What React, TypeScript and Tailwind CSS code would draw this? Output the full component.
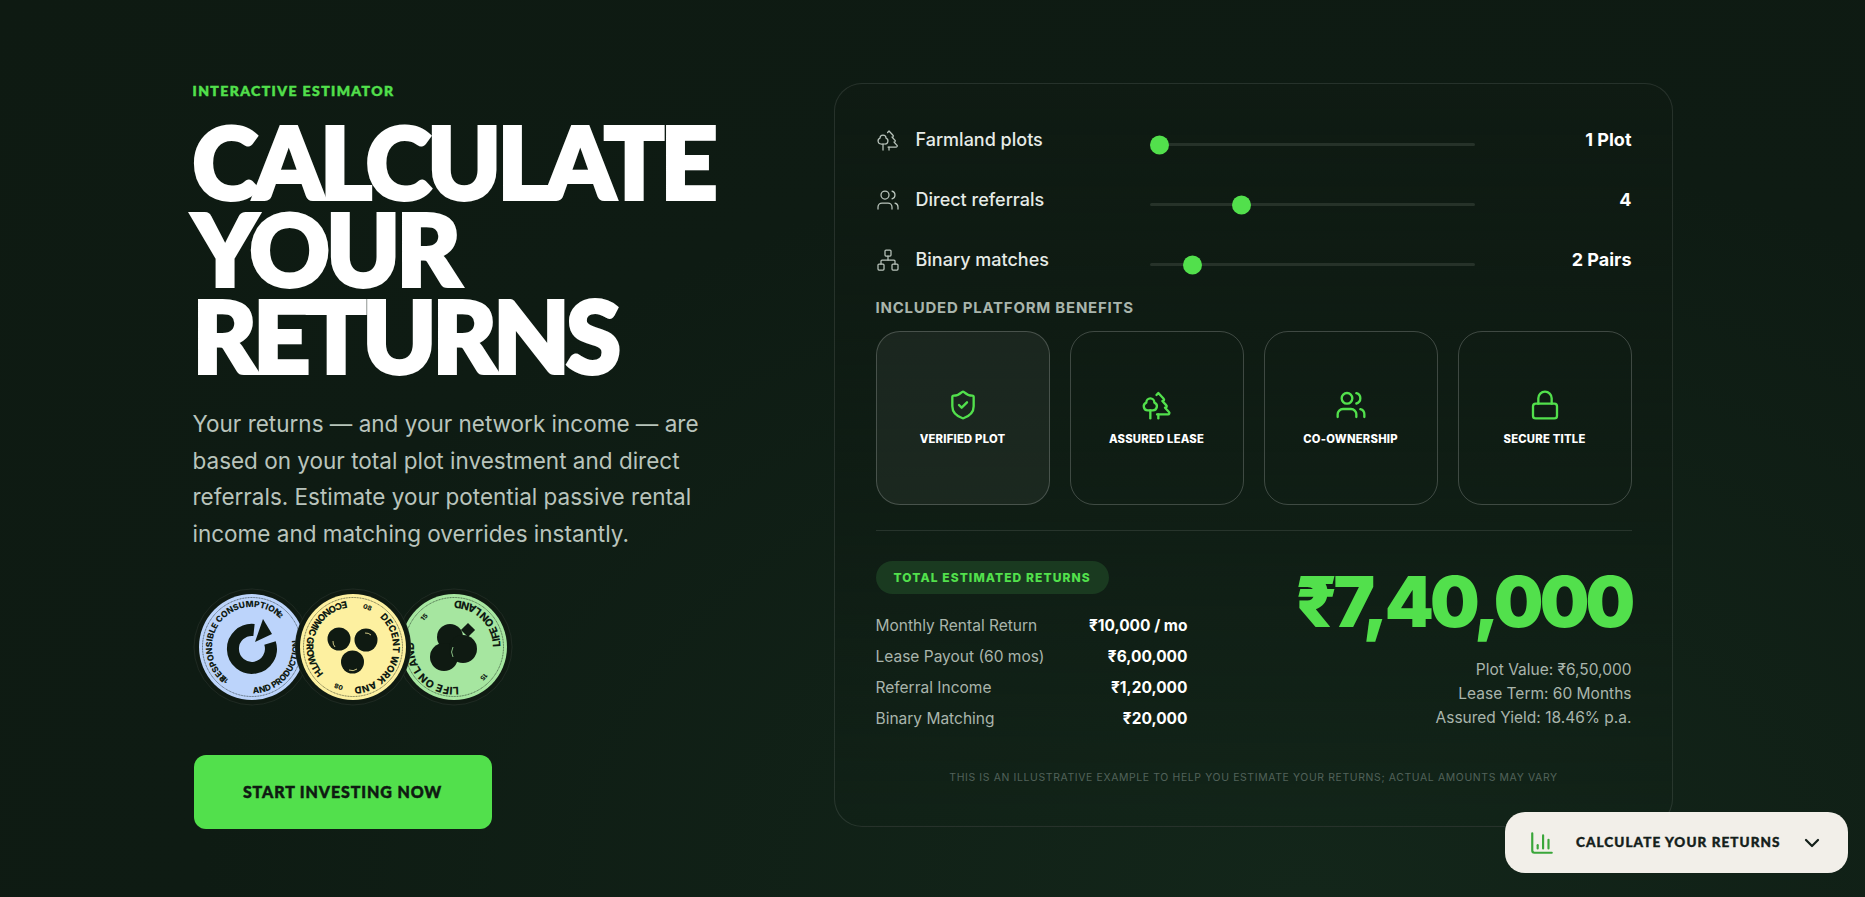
import { ChartColumn, ChevronDown, Lock, Network, ShieldCheck, Trees, Users } from "lucide-react";

const sliders = [
  { icon: Trees, label: "Farmland plots", pct: 0, value: "1 Plot" },
  { icon: Users, label: "Direct referrals", pct: 27, value: "4" },
  { icon: Network, label: "Binary matches", pct: 11, value: "2 Pairs" },
];

const benefits = [
  { icon: ShieldCheck, label: "Verified Plot", active: true },
  { icon: Trees, label: "Assured Lease", active: false },
  { icon: Users, label: "Co-Ownership", active: false },
  { icon: Lock, label: "Secure Title", active: false },
];

const breakdown = [
  ["Monthly Rental Return", "₹10,000 / mo"],
  ["Lease Payout (60 mos)", "₹6,00,000"],
  ["Referral Income", "₹1,20,000"],
  ["Binary Matching", "₹20,000"],
];

const DARK = "#0f1a12";

function Badge({
  id,
  fill,
  top,
  bottom,
  num,
  rotate,
  size,
  children,
}: {
  id: string;
  fill: string;
  top: string;
  bottom: string;
  num: string;
  rotate: number;
  size: number;
  children: React.ReactNode;
}) {
  return (
    <svg viewBox="0 0 120 120" className="h-[120px] w-[120px]">
      <circle cx="60" cy="60" r="58" fill={DARK} stroke="#ffffff" strokeOpacity="0.07" />
      <circle cx="60" cy="60" r="53" fill={fill} />
      <circle cx="60" cy="60" r="49.5" fill="none" stroke={DARK} strokeWidth="0.6" strokeDasharray="1 0.6" />
      <defs>
        <path id={`${id}-t`} d="M60 100 A40 40 0 0 1 60 20 A40 40 0 0 1 60 100" />
        <path id={`${id}-b`} d="M60 13.5 A46.5 46.5 0 0 0 60 106.5 A46.5 46.5 0 0 0 60 13.5" />
      </defs>
      <g
        transform={`rotate(${rotate} 60 60)`}
        fill={DARK}
        style={{ fontFamily: "Inter, sans-serif", fontSize: size, fontWeight: 800 }}
      >
        <text textAnchor="middle">
          <textPath href={`#${id}-t`} startOffset="50%">
            {top}
          </textPath>
        </text>
        <text textAnchor="middle">
          <textPath href={`#${id}-b`} startOffset="50%">
            {bottom}
          </textPath>
        </text>
        <text x="60" y="60" textAnchor="middle" transform="rotate(90 60 60) translate(0 -40)" style={{ fontSize: 6.5 }}>
          {num}
        </text>
        <text x="60" y="60" textAnchor="middle" transform="rotate(-90 60 60) translate(0 -40)" style={{ fontSize: 6.5 }}>
          {num}
        </text>
      </g>
      {children}
    </svg>
  );
}

export default function App() {
  return (
    <div className="h-[897px] overflow-hidden bg-[radial-gradient(ellipse_at_70%_100%,#13261a_0%,#0e1b13_60%,#0e1a12_100%)] font-['Inter',sans-serif]">
      <div className="mx-auto flex w-[1480px] justify-between pt-[83px]">
        <div className="w-[560px]">
          <p className="text-[14px] leading-[16px] font-black tracking-[0.1em] text-[#52e04c] uppercase font-['Lato',sans-serif] [-webkit-text-stroke:0.5px_#52e04c]">
            Interactive Estimator
          </p>
          <h1 className="mt-[18px] text-[99px] leading-[87px] font-black tracking-[-0.037em] text-white uppercase font-['Lato',sans-serif] [-webkit-text-stroke:4px_white]">
            Calculate
            <br />
            Your
            <br />
            Returns
          </h1>
          <p className="mt-[28px] w-[510px] text-[22.5px] leading-[36.6px] text-[#b9c4bc]">
            Your returns — and your network income — are based on your total plot investment and direct referrals.
            Estimate your potential passive rental income and matching overrides instantly.
          </p>
          <div className="mt-[35px] -ml-px flex">
            <Badge id="blue" fill="#bcd4fb" top="RESPONSIBLE CONSUMPTION" bottom="AND PRODUCTION" num="12" rotate={-50} size={8.5}>
              <path d="M78 56 A19 19 0 1 1 62 43" fill="none" stroke={DARK} strokeWidth="12" />
              <path d="M71 32 L80 47 L63 55 Z" fill={DARK} />
            </Badge>
            <div className="relative z-10 -ml-[19px]">
              <Badge id="yellow" fill="#fdf0a0" top="DECENT WORK AND" bottom="ECONOMIC GROWTH" num="08" rotate={110} size={9.5}>
                <circle cx="46" cy="52" r="11.5" fill={DARK} />
                <circle cx="73" cy="53" r="11.5" fill={DARK} />
                <circle cx="59.5" cy="75" r="11.5" fill={DARK} />
                <path d="M42 60 A8 8 0 0 1 40 54" fill="none" stroke="#fdf0a0" strokeWidth="0.8" />
                <path d="M72 46 A8 8 0 0 1 78 48" fill="none" stroke="#fdf0a0" strokeWidth="0.8" />
                <path d="M56 83 A8 8 0 0 0 64 82" fill="none" stroke="#fdf0a0" strokeWidth="0.8" />
              </Badge>
            </div>
            <div className="-ml-[19px]">
              <Badge id="green" fill="#a6e6a0" top="LIFE ON LAND" bottom="LIFE ON LAND" num="15" rotate={225} size={10.5}>
                <circle cx="56" cy="50" r="13" fill={DARK} />
                <circle cx="50" cy="70" r="14" fill={DARK} />
                <circle cx="69" cy="62" r="14" fill={DARK} />
                <rect x="69" y="38" width="10" height="10" transform="rotate(45 74 43)" fill={DARK} />
                <path d="M59 60 A10 10 0 0 0 59 70" fill="none" stroke="#a6e6a0" strokeWidth="0.8" />
              </Badge>
            </div>
          </div>
          <button className="mt-[48px] ml-px flex h-[74px] w-[298px] items-center justify-center rounded-xl bg-[#52e04c] text-[16px] font-black tracking-[0.055em] text-[#0f1a12] uppercase font-['Lato',sans-serif] [-webkit-text-stroke:0.5px_#0f1a12]">
            Start Investing Now
          </button>
        </div>

        <div className="h-[744px] w-[839px] rounded-[28px] border border-white/10 bg-[linear-gradient(180deg,#0f1b13_0%,#10201500_100%)] pt-[26px] pr-10 pl-[41px]">
          <div>
            {sliders.map((row) => (
              <div key={row.label} className="grid h-[60px] grid-cols-[274px_325px_1fr] items-center">
                <div className="flex items-center gap-4">
                  <row.icon size={24} strokeWidth={1.25} className="text-[#b9c4bc]" />
                  <span className="-mt-[2px] text-[18px] font-medium text-[#e6ebe7]">{row.label}</span>
                </div>
                <div className="relative mt-[9px] h-[3px] rounded-full bg-[#263229]">
                  <span
                    className="absolute top-1/2 h-[19px] w-[19px] -translate-y-1/2 rounded-full bg-[#52e04c]"
                    style={{ left: `calc(${row.pct}% - ${row.pct * 0.19}px)` }}
                  />
                </div>
                <span className="-mt-[2px] text-right text-[18px] font-bold text-white">{row.value}</span>
              </div>
            ))}
          </div>

          <h2 className="mt-[8px] text-[15px] leading-[20px] font-bold tracking-[0.05em] text-[#a9b5ac] uppercase">
            Included Platform Benefits
          </h2>
          <div className="mt-[13px] grid grid-cols-4 gap-5">
            {benefits.map((b) => (
              <div
                key={b.label}
                className={`flex h-[174px] flex-col items-center justify-center gap-[10px] rounded-[24px] border border-white/20 ${
                  b.active ? "bg-white/5" : ""
                }`}
              >
                <b.icon size={32} strokeWidth={1.75} className="text-[#52e04c]" />
                <span className="text-[11.25px] font-extrabold tracking-[0.02em] text-white uppercase">{b.label}</span>
              </div>
            ))}
          </div>

          <div className="mt-[25px] flex justify-between border-t border-white/10 pt-[30px]">
            <div className="w-[312px]">
              <span className="inline-block rounded-full bg-[#1a3a20] px-[18px] py-[8px] text-[12px] leading-[17px] font-extrabold tracking-[0.09em] text-[#52e04c] uppercase">
                Total Estimated Returns
              </span>
              <dl className="mt-[16px]">
                {breakdown.map(([k, v]) => (
                  <div key={k} className="flex h-[31px] items-center justify-between">
                    <dt className="text-[15.5px] text-[#a9b5ac]">{k}</dt>
                    <dd className="text-[15.5px] font-bold text-white">{v}</dd>
                  </div>
                ))}
              </dl>
            </div>
            <div className="text-right">
              <p className="mt-[3px] text-[70px] leading-[76px] font-black tracking-[-0.055em] text-[#52e04c]">
                ₹7,40,000
              </p>
              <p className="mt-[18px] text-[15.5px] leading-[23.8px] text-[#a9b5ac]">
                Plot Value: ₹6,50,000
                <br />
                Lease Term: 60 Months
                <br />
                Assured Yield: 18.46% p.a.
              </p>
            </div>
          </div>

          <p className="mt-[36px] text-center text-[10.45px] tracking-[0.06em] text-[#52625a] uppercase">
            This is an illustrative example to help you estimate your returns; actual amounts may vary
          </p>
        </div>
      </div>

      <div className="fixed right-[17px] bottom-[24px] flex h-[61px] w-[343px] items-center rounded-[20px] bg-[#f2efe9] pr-[24px] pl-[24px]">
        <ChartColumn size={26} strokeWidth={2} className="text-[#3aa63a]" />
        <span className="ml-[21px] flex-1 text-[13.5px] font-black tracking-[0.08em] text-[#14201a] uppercase font-['Lato',sans-serif] [-webkit-text-stroke:0.4px_#14201a]">
          Calculate Your Returns
        </span>
        <ChevronDown size={24} strokeWidth={2.25} className="text-[#14201a]" />
      </div>
    </div>
  );
}
